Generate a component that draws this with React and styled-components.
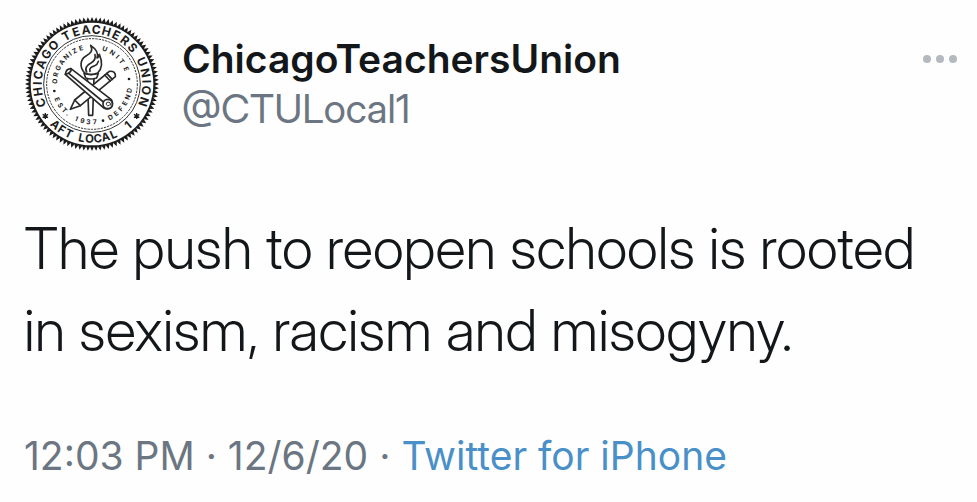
import React from 'react'
import styled, { createGlobalStyle } from 'styled-components'

const GlobalStyle = createGlobalStyle`
  body{
    margin: 0;
    background-color: #fefefe;
    font-family: Inter, "Liberation Sans", sans-serif;
  }
`

const Tweet = styled.article`
  padding: 16px 20px 16px 24px;
  color: #14171a;
`

const Header = styled.header`
  display: flex;
  align-items: flex-start;
  gap: 22px;
`

const Avatar = styled.svg`
  width: 136px;
  height: 136px;
  flex-shrink: 0;
  font-family: Inter, "Liberation Sans", sans-serif;
`

const Author = styled.div`
  display: flex;
  flex-direction: column;
  flex: 1;
  min-width: 0;
  padding-top: 18px;
`

const Name = styled.a`
  color: #14171a;
  font-size: 39px;
  font-weight: 600;
  line-height: 50px;
  text-decoration: none;
`

const Handle = styled.a`
  color: #6b7682;
  font-family: "Inter Display", Inter, "Liberation Sans", sans-serif;
  font-size: 40px;
  line-height: 50px;
  text-decoration: none;
`

const MoreButton = styled.button`
  display: flex;
  gap: 5px;
  margin-top: 39px;
  padding: 0;
  border: none;
  background: none;
  cursor: pointer;
`

const Dot = styled.span`
  width: 8px;
  height: 8px;
  border-radius: 50%;
  background-color: #b3b9be;
`

const Message = styled.p`
  margin: 56px 0 0;
  font-family: "Inter Display", Inter, "Liberation Sans", sans-serif;
  font-size: 57px;
  font-weight: 300;
  line-height: 82px;
`

const Meta = styled.footer`
  margin-top: 60px;
  color: #6b7682;
  font-size: 39px;
  line-height: 48px;
`

const SourceLink = styled.a`
  color: #4a90c8;
  text-decoration: none;
`

// words of the seal, angles are degrees from the top (or from the bottom when flipped)
const ringWords = [
  { text: 'CHICAGO', from: -110, to: -45, radius: 151, size: 36 },
  { text: 'TEACHERS', from: -28, to: 48, radius: 151, size: 36 },
  { text: 'UNION', from: 66, to: 109, radius: 151, size: 36 },
  { text: 'AFT', from: -42, to: -25, radius: 176, size: 34, flipped: true },
  { text: 'LOCAL', from: -11, to: 23, radius: 176, size: 34, flipped: true },
  { text: '1', from: 41, to: 41, radius: 176, size: 34, flipped: true },
  { text: 'ORGANIZE', from: -86, to: -17, radius: 105, size: 20 },
  { text: 'UNITE', from: 20, to: 66, radius: 105, size: 20 },
  { text: 'EST.', from: -66, to: -39, radius: 121, size: 20, flipped: true },
  { text: '1937', from: -24, to: 4, radius: 121, size: 20, flipped: true },
  { text: 'DEFEND', from: 29, to: 80, radius: 121, size: 20, flipped: true },
]

const letterWidth = (letter) => (letter === 'I' || letter === '.' ? 0.5 : 1)

// spread the letters between the two angles, narrow letters take less room
const placeLetters = ({ text, from, to }) => {
  const letters = text.split('')
  const steps = letters.map((l, i) => (i === 0 ? 0 : (letterWidth(l) + letterWidth(letters[i - 1])) / 2))
  const total = steps.reduce((a, b) => a + b, 0) || 1
  let walked = 0
  return letters.map((letter, i) => {
    walked += steps[i]
    return { letter, angle: from + ((to - from) * walked) / total }
  })
}

const RingWord = ({ word }) => (
  <g fontSize={word.size} fontWeight="700" textAnchor="middle" fill="#1c1c1c">
    {placeLetters(word).map(({ letter, angle }, i) => (
      <text
        key={i}
        y={word.flipped ? word.radius : -word.radius}
        transform={`rotate(${word.flipped ? -angle : angle})`}
      >
        {letter}
      </text>
    ))}
  </g>
)

const TEETH = 100
const teeth = Array.from({ length: TEETH * 2 }, (_, i) => {
  const a = (Math.PI * i) / TEETH
  const r = i % 2 ? 188 : 201
  return `${(r * Math.sin(a)).toFixed(1)},${(-r * Math.cos(a)).toFixed(1)}`
}).join(' ')

const Star = ({ x, y }) => (
  <path
    transform={`translate(${x} ${y})`}
    d="M0 -9V9M-8 -5L8 5M-8 5L8 -5"
    stroke="#1c1c1c"
    strokeWidth="4"
  />
)

const Seal = () => (
  <Avatar viewBox="-204 -204 408 408" role="img" aria-label="Chicago Teachers Union seal">
    <polygon points={teeth} fill="#1c1c1c" />
    <circle r="184" fill="#fff" />
    <g fill="none" stroke="#333">
      <circle r="145" strokeWidth="3" />
      <circle r="136" strokeWidth="3" strokeDasharray="7 3" />
    </g>
    {ringWords.map((word) => (
      <RingWord key={word.text} word={word} />
    ))}
    <Star x={-140} y={96} />
    <Star x={134} y={96} />
    <g fill="#1c1c1c">
      <circle cx="-113" cy="21" r="4" />
      <circle cx="111" cy="-15" r="4" />
      <circle cx="33" cy="110" r="4" />
    </g>
    <g fill="#fff" stroke="#2a2a2a" strokeWidth="5" strokeLinejoin="round" strokeLinecap="round">
      {/* torch */}
      <path d="M-14 -22L-10 94H2L6 -22Z" />
      <path d="M-24 -32Q-3 -24 19 -32L14 -18Q-3 -12 -19 -18Z" />
      <path d="M-22 -33C-38 -50 -36 -74 -18 -84C-4 -92 4 -100 -4 -116C14 -104 20 -92 15 -78C20 -80 22 -84 22 -89C32 -66 30 -46 17 -33Q-3 -25 -22 -33Z" />
      <path d="M-16 -36C-23 -48 -14 -58 -2 -64C8 -70 11 -80 9 -88M-6 -38C-10 -48 0 -52 8 -55C16 -58 18 -64 19 -68" fill="none" />
      {/* pencil */}
      <path d="M52 -38L-52 48L-65 76L-35 65L70 -22Q72 -40 52 -38Z" />
      <path d="M38 -27L55 -9M44 -32L61 -14M-52 48L-35 65" fill="none" />
      {/* rolled paper */}
      <path d="M-63 -46Q-78 -46 -80 -29L34 71Q48 79 58 70Q66 58 58 47Z" />
      <path d="M-63 -46Q-60 -35 -80 -29M-70 -32L38 57" fill="none" />
      <circle cx="47" cy="60" r="14" />
      <path d="M52 64Q46 68 43 62Q41 55 48 54Q57 54 56 63" fill="none" strokeWidth="3" />
    </g>
  </Avatar>
)

const App = () => {
  return (
    <>
      <GlobalStyle />
      <Tweet>
        <Header>
          <Seal />
          <Author>
            <Name href="#profile">ChicagoTeachersUnion</Name>
            <Handle href="#profile">@CTULocal1</Handle>
          </Author>
          <MoreButton type="button" aria-label="More">
            <Dot />
            <Dot />
            <Dot />
          </MoreButton>
        </Header>
        <Message>The push to reopen schools is rooted in sexism, racism and misogyny.</Message>
        <Meta>
          <time>12:03 PM · 12/6/20</time> · <SourceLink href="#source">Twitter for iPhone</SourceLink>
        </Meta>
      </Tweet>
    </>
  )
}

export default App
